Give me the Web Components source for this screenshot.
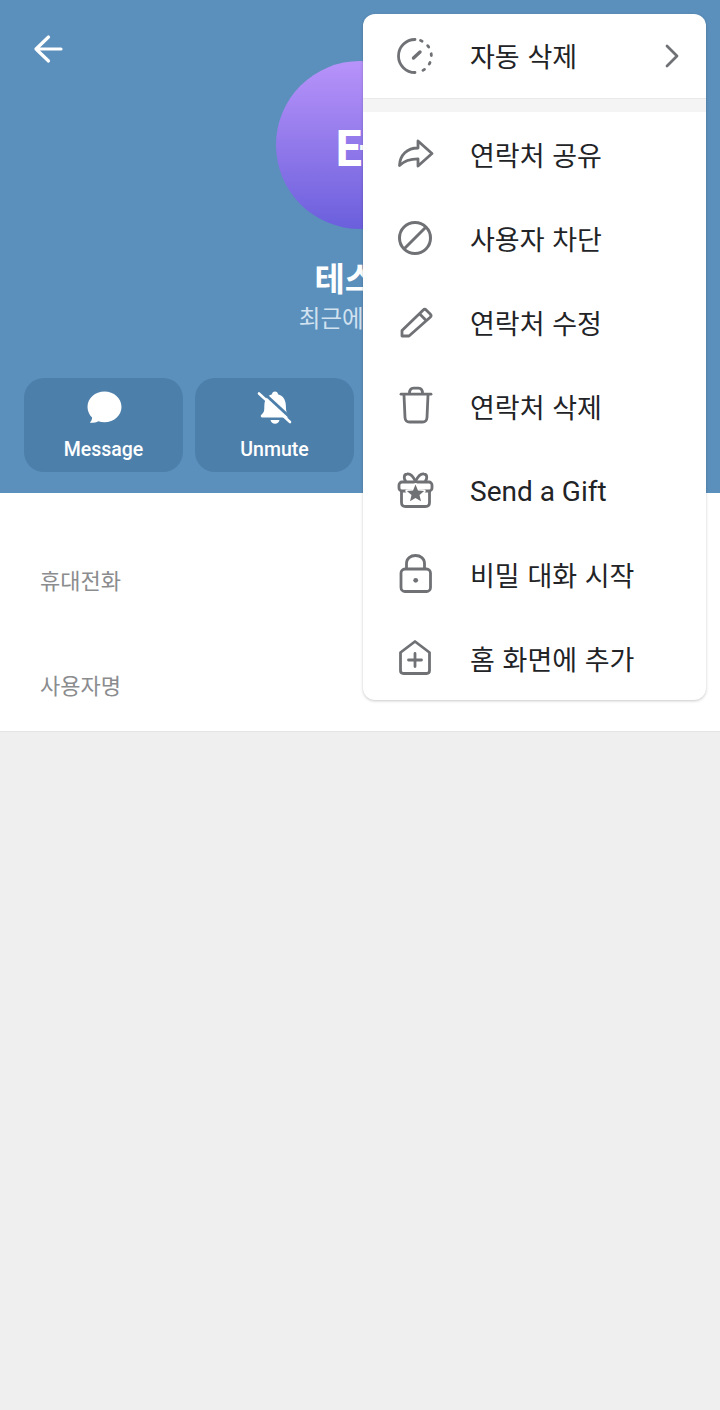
<!DOCTYPE html>
<html lang="ko">
<head>
<meta charset="utf-8">
<title>Profile</title>
<style>
  html, body { margin: 0; background: #efefef; }
  body { font-family: Roboto, "Noto Sans CJK KR", sans-serif; }
</style>
</head>
<body>
<profile-page>
  <profile-header name="테스트" status="최근에 접속함" initials="E-">
    <action-button label="Message">
      <svg viewBox="0 0 40 40" width="40" height="40"><path fill="#fff" d="M20.500 4.600c9.400 0 17 6.800 17 15.300s-7.600 15.300-17 15.300c-2.200 0-4.300-.4-6.200-1-2 1.200-5.200 1.700-8.500 1.500 1.400-1.200 2.200-2.800 2.300-5.100C5.400 27.700 3.500 24 3.500 19.900c0-8.500 7.600-15.300 17-15.300z"/></svg>
    </action-button>
    <action-button label="Unmute">
      <svg viewBox="0 0 40 40" width="40" height="40">
        <path fill="#fff" d="M20 4.500c1.700 0 2.800 1.100 3 2.700 5 1.500 7.500 5.300 7.800 10.500l.3 5.300c.1 2 1.600 3.900 2.800 5.100.8.900.2 2.400-1.100 2.400H7.200c-1.300 0-1.900-1.500-1.100-2.400 1.400-1.500 3-3.100 3.100-5.100l.2-5.300c.3-5.200 2.800-9 7.600-10.500.2-1.600 1.300-2.700 3-2.700z"/>
        <path fill="#fff" d="M15.500 33h9c-.4 2.300-2.200 3.800-4.500 3.800s-4.100-1.500-4.500-3.800z"/>
        <path stroke="#4d7fab" stroke-width="3" d="M6 3.500 38 33"/>
        <path stroke="#fff" stroke-width="2.600" stroke-linecap="round" d="M4 6.500 35 35"/>
      </svg>
    </action-button>
  </profile-header>
  <info-card>
    <info-row label="휴대전화"></info-row>
    <info-row label="사용자명"></info-row>
  </info-card>
  <popup-menu>
    <menu-item label="자동 삭제" chevron>
      <svg viewBox="0 0 44 44" width="44" height="44" fill="none" stroke="#6f7175" stroke-width="2.800" stroke-linecap="round">
        <path d="M22 5.500A16.500 16.500 0 0 0 22 38.500"/>
        <path stroke-dasharray="1.800 7.100" d="M27.500 6.500A16.500 16.500 0 0 1 27.500 37.500"/>
        <path stroke-width="3.400" d="M20.500 24 27 18"/>
      </svg>
    </menu-item>
    <menu-divider></menu-divider>
    <menu-item label="연락처 공유">
      <svg viewBox="0 0 44 44" width="44" height="44" fill="none" stroke="#6f7175" stroke-width="2.800" stroke-linejoin="round">
        <path d="M25 8 39 20.500 25 33V25.800C17 25.800 11.500 27.500 6.500 32.500 7 22 14 15 25 15z"/>
      </svg>
    </menu-item>
    <menu-item label="사용자 차단">
      <svg viewBox="0 0 44 44" width="44" height="44" fill="none" stroke="#6f7175" stroke-width="3">
        <circle cx="22" cy="21" r="15.500"/>
        <path d="M11 32 33 10"/>
      </svg>
    </menu-item>
    <menu-item label="연락처 수정">
      <svg viewBox="0 0 44 44" width="44" height="44" fill="none" stroke="#6f7175" stroke-width="2.800" stroke-linejoin="round">
        <path d="M9 35V29.500L30 9.200c1-1 2.400-1 3.400 0l3.800 3.700c1 1 1 2.400 0 3.400L16 35z"/>
        <path d="M26.500 12.800 33.700 20"/>
      </svg>
    </menu-item>
    <menu-item label="연락처 삭제">
      <svg viewBox="0 0 44 44" width="44" height="44" fill="none" stroke="#6f7175" stroke-width="2.800" stroke-linecap="round" stroke-linejoin="round">
        <path d="M8 9.200H38"/>
        <path d="M16.500 8.500C16.500 4.500 18 3.200 20.500 3.200h5C28 3.200 29.500 4.500 29.500 8.500"/>
        <path d="M11 10 12 32.500C12.200 35.500 13.800 37 16.500 37h13c2.700 0 4.300-1.500 4.500-4.500L35 10"/>
      </svg>
    </menu-item>
    <menu-item label="Send a Gift" latin>
      <svg viewBox="0 0 44 44" width="44" height="44" fill="none" stroke="#6f7175" stroke-width="2.800" stroke-linejoin="round">
        <rect x="6" y="13" width="33" height="9" rx="3"/>
        <path d="M8.500 22V33.500C8.500 36 10 37.500 12.500 37.500H32.500C35 37.500 36.500 36 36.500 33.500V22"/>
        <path d="M22.500 12.500C20 7 17 4.500 14 5 10.500 5.500 10.500 10 13 12.500M22.500 12.500C25 7 28 4.500 31 5 34.500 5.500 34.500 10 32 12.500"/>
        <path fill="#6f7175" stroke="#fff" stroke-width="3" paint-order="stroke" d="M22.500 15.500 25 21.500 31.200 22 26.500 26.100 28 32.200 22.500 29 17 32.200 18.500 26.100 13.800 22 20 21.500z"/>
      </svg>
    </menu-item>
    <menu-item label="비밀 대화 시작">
      <svg viewBox="0 0 44 44" width="44" height="44" fill="none" stroke="#6f7175" stroke-width="2.800">
        <rect x="8" y="16" width="29.500" height="22.500" rx="4"/>
        <path d="M13.500 16V10.500C13.500 5.500 17.500 2.500 22.500 2.500S31.500 5.500 31.500 10.500V16"/>
        <circle cx="22.700" cy="27.300" r="2.400" fill="#6f7175" stroke="none"/>
      </svg>
    </menu-item>
    <menu-item label="홈 화면에 추가">
      <svg viewBox="0 0 44 44" width="44" height="44" fill="none" stroke="#6f7175" stroke-width="2.800" stroke-linejoin="round" stroke-linecap="round">
        <path d="M22 4.500 7.500 15.500V33.500C7.500 35.500 8.500 36.500 10.500 36.500H33.500C35.500 36.500 36.500 35.500 36.500 33.500V15.500z"/>
        <path d="M22 16.500V29.500M15.500 23H28.500"/>
      </svg>
    </menu-item>
  </popup-menu>
</profile-page>

<script>
class ProfilePage extends HTMLElement {
  constructor() {
    super();
    this.attachShadow({ mode: "open" }).innerHTML = `
      <style>
        :host { display: block; position: relative; width: 720px; height: 1410px; overflow: hidden; background: #efefef; }
      </style>
      <slot></slot>
    `;
  }
}

class ProfileHeader extends HTMLElement {
  constructor() {
    super();
    const name = this.getAttribute("name");
    const status = this.getAttribute("status");
    const initials = this.getAttribute("initials");
    this.attachShadow({ mode: "open" }).innerHTML = `
      <style>
        :host { display: block; background: #5b8fbc; color: #fff; padding-bottom: 21px; }
        .bar { height: 61px; padding-left: 28px; box-sizing: border-box; padding-top: 29px; }
        .bar svg { display: block; }
        .who { display: flex; flex-direction: column; align-items: center; }
        .avatar {
          width: 168px; height: 168px; border-radius: 50%; box-sizing: border-box; padding-right: 16px;
          background: linear-gradient(#b893fa, #6b5fdc);
          display: flex; align-items: center; justify-content: center;
          font: 700 48px "Noto Sans CJK KR", sans-serif; letter-spacing: -6px;
        }
        .name { margin-top: 27px; font: 700 33px/42px "Noto Sans CJK KR", sans-serif; }
        .status { margin-top: 4px; padding-left: 14px; font: 400 23.500px/30px "Noto Sans CJK KR", sans-serif; color: #d2e2f0; }
        .actions { display: grid; grid-template-columns: repeat(4, 159px); gap: 12px; padding: 46px 24px 0; }
      </style>
      <div class="bar">
        <svg viewBox="0 0 40 40" width="40" height="40" fill="none" stroke="#fff" stroke-width="3.200" stroke-linecap="round" stroke-linejoin="round">
          <path d="M8 20H33M20.500 8 8 20 20.500 32"/>
        </svg>
      </div>
      <div class="who">
        <div class="avatar">${initials}</div>
        <div class="name">${name}</div>
        <div class="status">${status}</div>
      </div>
      <div class="actions"><slot></slot></div>
    `;
  }
}

class ActionButton extends HTMLElement {
  constructor() {
    super();
    this.attachShadow({ mode: "open" }).innerHTML = `
      <style>
        :host { display: flex; flex-direction: column; align-items: center; height: 94px; box-sizing: border-box; padding-top: 9px; border-radius: 20px; background: #4d7fab; color: #fff; }
        ::slotted(svg) { display: block; }
        .label { margin-top: 10px; font: 500 19.500px/26px Roboto, sans-serif; }
      </style>
      <slot></slot>
      <div class="label">${this.getAttribute("label")}</div>
    `;
  }
}

class InfoCard extends HTMLElement {
  constructor() {
    super();
    this.attachShadow({ mode: "open" }).innerHTML = `
      <style>
        :host { display: flex; flex-direction: column; gap: 83px; padding: 75px 40px 36px; background: #fff; border-bottom: 1px solid #e4e4e4; }
      </style>
      <slot></slot>
    `;
  }
}

class InfoRow extends HTMLElement {
  constructor() {
    super();
    this.attachShadow({ mode: "open" }).innerHTML = `
      <style>
        :host { display: block; font: 400 22px/22px "Noto Sans CJK KR", sans-serif; color: #8b8c8e; }
      </style>
      ${this.getAttribute("label")}
    `;
  }
}

class PopupMenu extends HTMLElement {
  constructor() {
    super();
    this.attachShadow({ mode: "open" }).innerHTML = `
      <style>
        :host { position: absolute; left: 363px; top: 14px; width: 343px; height: 686px; display: block; background: #fff; border-radius: 12px; overflow: hidden; box-shadow: 0 1px 3px rgba(0, 0, 0, .22); }
      </style>
      <slot></slot>
    `;
  }
}

class MenuDivider extends HTMLElement {
  constructor() {
    super();
    this.attachShadow({ mode: "open" }).innerHTML = `
      <style>
        :host { display: block; height: 14px; margin-bottom: 1px; box-sizing: border-box; background: #f4f4f5; border-top: 1px solid #e9e9ea; }
      </style>
    `;
  }
}

class MenuItem extends HTMLElement {
  constructor() {
    super();
    // the latin label runs a bit larger than the hangul ones in the reference
    const latin = this.hasAttribute("latin");
    const chevron = this.hasAttribute("chevron") ? `
      <svg class="chev" viewBox="0 0 20 28" width="20" height="28" fill="none" stroke="#6f7175" stroke-width="2.800" stroke-linecap="round" stroke-linejoin="round">
        <path d="M5 4 15 14 5 24"/>
      </svg>` : "";
    this.attachShadow({ mode: "open" }).innerHTML = `
      <style>
        :host { display: flex; align-items: center; height: 84px; padding-left: 30px; color: #222326; }
        ::slotted(svg) { display: block; flex: none; }
        .label {
          margin-left: 33px; padding-top: ${latin ? 2 : 4}px; flex: 1;
          font: 400 ${latin ? 28 : 27}px/36px Roboto, "Noto Sans CJK KR", sans-serif;
          word-spacing: ${latin ? 0 : 1}px; white-space: nowrap;
        }
        .chev { margin-right: 24px; }
      </style>
      <slot></slot>
      <div class="label">${this.getAttribute("label")}</div>
      ${chevron}
    `;
  }
}

customElements.define("profile-page", ProfilePage);
customElements.define("profile-header", ProfileHeader);
customElements.define("action-button", ActionButton);
customElements.define("info-card", InfoCard);
customElements.define("info-row", InfoRow);
customElements.define("popup-menu", PopupMenu);
customElements.define("menu-divider", MenuDivider);
customElements.define("menu-item", MenuItem);
</script>
</body>
</html>
